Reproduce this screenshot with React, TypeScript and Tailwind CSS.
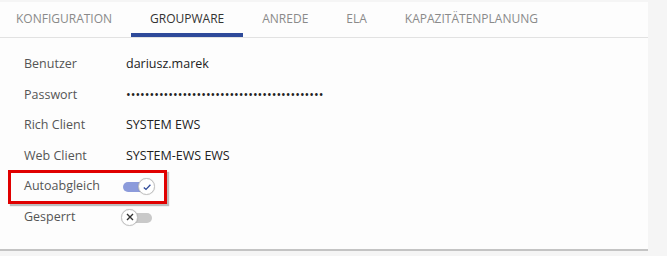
import React from 'react';

const tabs = ['KONFIGURATION', 'GROUPWARE', 'ANREDE', 'ELA', 'KAPAZITÄTENPLANUNG'];

function Toggle({ on }: { on: boolean }) {
  return (
    <div className="relative ml-[-5px] h-[17px] w-[34px] shrink-0">
      <div
        className={`absolute left-[2px] right-[3px] top-[4px] h-[10px] rounded-full ${on ? 'bg-[#8c9bdb]' : 'bg-[#c9c9c9]'}`}
      />
      <div
        className={`absolute top-0 flex h-[17px] w-[17px] items-center justify-center rounded-full border border-[#c2c2c2] bg-white shadow-[0_0_1px_rgba(0,0,0,0.2)] ${on ? 'right-0' : 'left-0'}`}
      >
        {on ? (
          <svg width="10" height="10" viewBox="0 0 10 10" fill="none" stroke="#2e4a9a" strokeWidth="1.3">
            <path d="M1.8 5.4 L4 7.4 L8.4 2.8" />
          </svg>
        ) : (
          <svg width="8" height="8" viewBox="0 0 8 8" fill="none" stroke="#333" strokeWidth="1.4">
            <path d="M1 1 L7 7 M7 1 L1 7" />
          </svg>
        )}
      </div>
    </div>
  );
}

export default function App() {
  const rows: { label: string; value?: string; toggle?: boolean; highlight?: boolean }[] = [
    { label: 'Benutzer', value: 'dariusz.marek' },
    { label: 'Passwort', value: '•'.repeat(42) },
    { label: 'Rich Client', value: 'SYSTEM EWS' },
    { label: 'Web Client', value: 'SYSTEM-EWS EWS' },
    { label: 'Autoabgleich', toggle: true, highlight: true },
    { label: 'Gesperrt', toggle: false },
  ];

  return (
    <div className="h-[256px] w-[667px] bg-[#f5f5f5] pt-[2px] font-['Open_Sans',sans-serif]">
      <div className="w-[648px] border-b-2 border-[#c4c4c4] bg-[#fdfdfd]">
        {/* Tabs */}
        <div className="flex h-[36px] items-end border-b border-[#e2e2e2]">
          {tabs.map((t, i) => (
            <div
              key={t}
              className={`flex h-[36px] items-center border-b-[4px] pt-[3px] text-[12px] ${
                i === 1
                  ? 'border-[#2e4a9a] text-[#333]'
                  : 'border-transparent text-[#8a8a8a]'
              } ${i === 0 ? 'pl-[16px] pr-[19px]' : 'px-[19px]'}`}
            >
              {t}
            </div>
          ))}
        </div>

        {/* Form rows */}
        <div className="flex flex-col pt-[11px] pb-[16px]">
          {rows.map((r) => (
            <div key={r.label} className="flex h-[30.6px] items-center pl-[8px]">
              <div
                className={`flex h-[34px] w-[159px] shrink-0 items-center border-[3px] pl-[13px] ${
                  r.highlight
                    ? 'border-[#e00000] shadow-[2px_2px_1px_rgba(0,0,0,0.25)]'
                    : 'border-transparent'
                }`}
              >
                <span className="w-[102px] shrink-0 whitespace-nowrap text-[12.5px] text-[#555]">{r.label}</span>
                {r.toggle !== undefined ? (
                  <Toggle on={r.toggle} />
                ) : (
                  <span className="whitespace-nowrap text-[12.5px] text-[#222]">{r.value}</span>
                )}
              </div>
            </div>
          ))}
        </div>
      </div>
    </div>
  );
}
